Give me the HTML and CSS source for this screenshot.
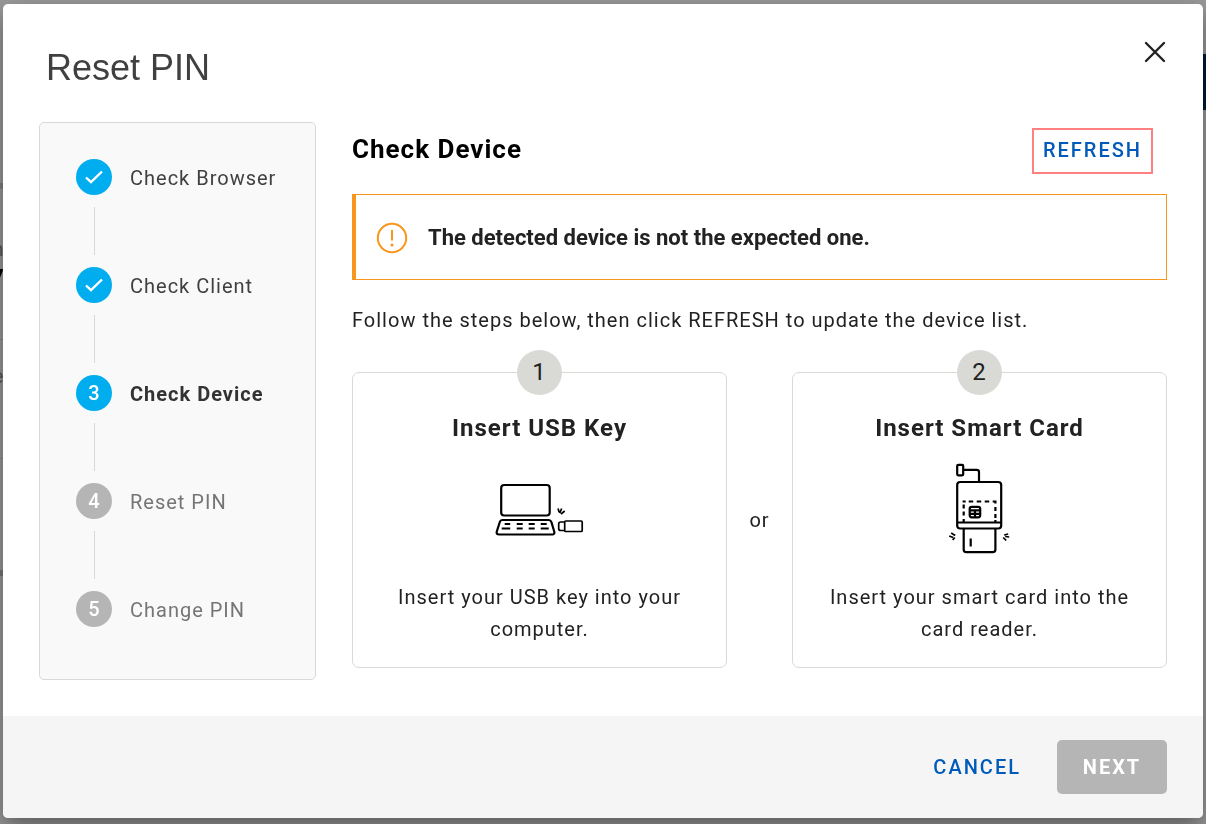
FILE: index.html
```html
<!DOCTYPE html>
<html lang="en">

<head>
    <meta charset="UTF-8">
    <meta name="viewport" content="width=device-width, initial-scale=1.0">
    <title>Reset PIN</title>
    <link rel="stylesheet" href="styles.css">
</head>

<body>
    <!-- page edges left visible around the dialog -->
    <div class="backdrop" aria-hidden="true">
        <div class="page-left">
            <div class="block block-top"></div>
            <div class="block block-name"><span>n</span><b>7</b></div>
            <div class="block block-type"><span>e</span></div>
            <div class="block block-last"></div>
        </div>
        <div class="page-nav"></div>
    </div>

    <div class="dialog" role="dialog" aria-labelledby="dialogTitle">
        <header class="dialog-header">
            <h1 id="dialogTitle">Reset PIN</h1>
            <button type="button" class="close" aria-label="Close">
                <svg width="22" height="22" viewBox="0 0 22 22">
                    <path d="M2 2L20 20M20 2L2 20" />
                </svg>
            </button>
        </header>

        <div class="dialog-body">
            <ol class="steps">
                <li class="step done">
                    <span class="dot"><svg width="20" height="16" viewBox="0 0 20 16"><path d="M2 8.500L7 13.200L18 2.500" /></svg></span>
                    <span class="step-label">Check Browser</span>
                </li>
                <li class="step done">
                    <span class="dot"><svg width="20" height="16" viewBox="0 0 20 16"><path d="M2 8.500L7 13.200L18 2.500" /></svg></span>
                    <span class="step-label">Check Client</span>
                </li>
                <li class="step current">
                    <span class="dot">3</span>
                    <span class="step-label">Check Device</span>
                </li>
                <li class="step">
                    <span class="dot">4</span>
                    <span class="step-label">Reset PIN</span>
                </li>
                <li class="step">
                    <span class="dot">5</span>
                    <span class="step-label">Change PIN</span>
                </li>
            </ol>

            <main class="content">
                <div class="content-header">
                    <h2>Check Device</h2>
                    <button type="button" class="text-button refresh">REFRESH</button>
                </div>

                <div class="alert" role="alert">
                    <svg width="32" height="32" viewBox="0 0 32 32">
                        <circle cx="16" cy="16" r="14.2" />
                        <path d="M16 8V18.500" />
                        <circle class="point" cx="16" cy="23" r="1.500" />
                    </svg>
                    <p>The detected device is not the expected one.</p>
                </div>

                <p class="hint">Follow the steps below, then click REFRESH to update the device list.</p>

                <div class="options">
                    <section class="option">
                        <span class="option-number">1</span>
                        <h3>Insert USB Key</h3>
                        <svg class="drawing" width="92" height="92" viewBox="0.800 0 92 92">
                            <rect x="8" y="22" width="48.500" height="30.500" rx="3" />
                            <path d="M9 57H55.500Q57.500 57 58.200 59L61 68.500Q61.800 71.500 59 71.500H6Q2.800 71.500 3.600 68.500L6.600 59Q7.200 57 9 57Z" />
                            <path d="M11.500 61H17M23.500 61H29.500M35.500 61H41.500M47.500 61H53.500M8.500 65.500H17M23.500 65.500H29.500M35.500 65.500H41.500M47.500 65.500H55.500" />
                            <rect class="thin" x="71.500" y="58" width="17.500" height="10.500" rx="1" />
                            <path class="thin" d="M71.500 59H67.500Q65.500 59 65.500 61V65.500Q65.500 67.500 67.500 67.500H71.500" />
                            <path class="thin" d="M64.800 45.500L66 49.200M68.500 45.500L66.500 50.200M71.500 48L67.800 51" />
                        </svg>
                        <p>Insert your USB key into your computer.</p>
                    </section>

                    <span class="or">or</span>

                    <section class="option">
                        <span class="option-number">2</span>
                        <h3>Insert Smart Card</h3>
                        <svg class="drawing" width="92" height="92" viewBox="0.800 0 92 92">
                            <rect x="24" y="1.800" width="6" height="10.500" rx="1" />
                            <path d="M30 6.800H43.500Q45.800 6.800 45.800 9V19" />
                            <rect x="24" y="19" width="44" height="46.500" rx="3" />
                            <path d="M24 59.500H68" />
                            <path d="M30.500 59V56M30.500 52.500V48.500M30.500 45.500V41.500M30.500 39.500V38.500H32.500M35.500 38.500H40M43.500 38.500H48M51.500 38.500H56M59.500 38.500H62.200V40.500M62.200 44V48M62.200 51V55M62.200 57V59" />
                            <rect x="36.500" y="43.800" width="10.500" height="10.500" rx="2" />
                            <path d="M36.500 47.300H47M36.500 50.800H47M41.800 47.500V54" />
                            <path d="M30.500 66V86.500Q30.500 89.200 33 89.200H59.500Q62.200 89.200 62.200 86.500V66" />
                            <path d="M37.500 75.500V83.500" />
                            <path class="thin" d="M18 70L22 72.500M16 73L20 74.500M21.500 74.500L19.500 77M75 71L71 72M76 74L72 73.500M70 74.500L73 77.500" />
                        </svg>
                        <p>Insert your smart card into the card reader.</p>
                    </section>
                </div>
            </main>
        </div>

        <footer class="dialog-footer">
            <button type="button" class="text-button">CANCEL</button>
            <button type="button" class="next" disabled>NEXT</button>
        </footer>
    </div>
</body>

</html>
```

FILE: styles.css
```css
* {
    margin: 0;
    padding: 0;
    box-sizing: border-box;
}

body {
    min-height: 100vh;
    padding: 4px 3px 6px;
    background: #999;
    color: #222;
    font-family: Roboto, sans-serif;
    font-size: 20px;
    line-height: 32px;
    letter-spacing: 1px;
}

button {
    border: none;
    background: none;
    font: inherit;
    letter-spacing: inherit;
    cursor: pointer;
}

.backdrop {
    position: fixed;
    inset: 0;
    display: flex;
    justify-content: space-between;
}

.page-left {
    width: 12px;
    padding-top: 183px;
    overflow: hidden;
    color: #555;
    line-height: 28px;
    letter-spacing: 0;
}

.block {
    display: flex;
    flex-direction: column;
    align-items: center;
    margin-left: -16px;
    border-bottom: 1px solid #888;
}

.block b {
    color: #000;
}

.block-top {
    height: 6px;
    background: #808080;
}

.block-name {
    height: 151px;
    padding-top: 46px;
}

.block-type {
    height: 119px;
    padding-top: 22px;
}

.block-last {
    height: 117px;
    border-bottom: 6px solid #777;
}

.page-nav {
    width: 12px;
    height: 56px;
    margin-top: 54px;
    background: #001a33;
}

.dialog {
    position: relative;
    border-radius: 5px;
    background: #fff;
    box-shadow: 0 10px 24px rgba(0, 0, 0, 0.4);
}

.dialog-header {
    display: flex;
    justify-content: space-between;
    align-items: flex-start;
    height: 118px;
    padding: 32px 32px 0 43px;
}

h1 {
    color: #404040;
    font-family: "Liberation Sans", Arial, sans-serif;
    font-size: 36px;
    font-weight: 400;
    line-height: 64px;
    letter-spacing: 0;
}

.close {
    display: flex;
    padding: 5px;
}

.close svg {
    fill: none;
    stroke: #222;
    stroke-width: 2.4;
    stroke-linecap: round;
}

.dialog-body {
    display: flex;
    gap: 36px;
    padding: 0 36px 36px;
}

.steps {
    flex: none;
    width: 277px;
    padding: 36px 36px 52px;
    border: 1px solid #d8d8d8;
    border-radius: 5px;
    background: #f9f9f9;
    list-style: none;
}

.step {
    display: flex;
    flex-wrap: wrap;
    align-items: center;
    column-gap: 18px;
    color: #757575;
}

.step:not(:last-child)::after {
    content: "";
    width: 1px;
    height: 48px;
    margin: 12px 100px 12px 18px;
    background: #d8d8d8;
}

.dot {
    display: flex;
    justify-content: center;
    align-items: center;
    width: 36px;
    height: 36px;
    border-radius: 50%;
    background: #b5b5b5;
    color: #fff;
    font-weight: 500;
    letter-spacing: 0;
}

.dot svg {
    fill: none;
    stroke: #fff;
    stroke-width: 2.4;
}

.step-label {
    padding-top: 2px;
    white-space: nowrap;
}

.done .dot,
.current .dot {
    background: #00adef;
}

.done {
    color: #404040;
}

.current {
    color: #333;
}

.current .step-label {
    font-weight: 700;
}

.content {
    flex: 1;
    min-width: 0;
}

.content-header {
    display: flex;
    justify-content: space-between;
    height: 72px;
    padding: 6px 14px 0 0;
}

h2 {
    color: #000;
    font-size: 26px;
    font-weight: 700;
    line-height: 42px;
}

.text-button {
    color: #005ab9;
    font-weight: 500;
    letter-spacing: 2px;
}

.refresh {
    height: 46px;
    padding: 0 9px 2px;
    border: 2px solid #ff8080;
}

.alert {
    display: flex;
    align-items: center;
    gap: 20px;
    height: 86px;
    padding: 2px 20px 0;
    border: 1px solid #f8971d;
    border-left-width: 4px;
    font-size: 22px;
    font-weight: 700;
    letter-spacing: 0;
}

.alert svg {
    fill: none;
    stroke: #f8971d;
    stroke-width: 2;
}

.alert .point {
    fill: #f8971d;
    stroke: none;
}

.hint {
    padding: 24px 0 36px;
}

.options {
    display: grid;
    grid-template-columns: 1fr 65px 1fr;
    align-items: center;
    text-align: center;
}

.option {
    position: relative;
    display: flex;
    flex-direction: column;
    align-items: center;
    height: 296px;
    padding: 39px 32px 0;
    border: 1px solid #d9dad6;
    border-radius: 7px;
}

.option-number {
    position: absolute;
    top: -23px;
    left: calc(50% - 23px);
    width: 45px;
    border-radius: 50%;
    background: #d9dad6;
    font-size: 24px;
    line-height: 45px;
    letter-spacing: 0;
}

h3 {
    font-size: 24px;
    font-weight: 700;
    line-height: 32px;
}

.drawing {
    margin: 19px 0 26px;
    fill: none;
    stroke: #000;
    stroke-width: 2.2;
}

.drawing .thin {
    stroke-width: 1.7;
}

.dialog-footer {
    display: flex;
    justify-content: flex-end;
    align-items: center;
    gap: 36px;
    padding: 24px 36px;
    border-radius: 0 0 5px 5px;
    background: #f5f5f5;
}

.next {
    width: 110px;
    height: 54px;
    border-radius: 5px;
    background: #b5b5b5;
    color: #fff;
    font-weight: 700;
    letter-spacing: 2px;
}
```
